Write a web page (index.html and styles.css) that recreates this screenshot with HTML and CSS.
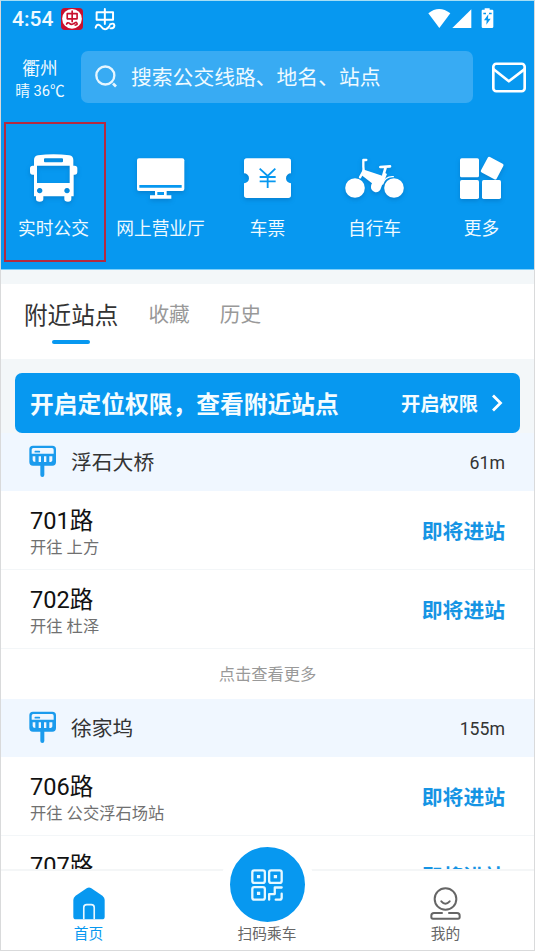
FILE: index.html
```html
<!DOCTYPE html>
<html lang="zh-CN">
<head>
<meta charset="utf-8">
<title>公交出行</title>
<link rel="stylesheet" href="styles.css">
</head>
<body>
<div class="app">
  <header class="header">
    <div class="status">
      <span class="clock">4:54</span>
      <svg class="status-app" viewBox="183 21 67 67">
        <rect x="183" y="21" width="67" height="67" rx="12" fill="#c8102e"/>
        <circle cx="216.500" cy="54" r="30" fill="#fff"/>
        <g fill="none" stroke="#c8102e" stroke-width="5" stroke-linejoin="round" stroke-linecap="round">
          <path d="M202 38h30v16h-30zM217 30v33M200 70q3-6 8-3 6 6 11 3 5-2 9-5M230 65q6 8-4 8"/>
        </g>
      </svg>
      <svg class="status-glyph" viewBox="282 20 67 70">
        <g fill="none" stroke="#fff" stroke-width="6" stroke-linejoin="round" stroke-linecap="round">
          <path d="M290 33h50v23h-50zM315 23v46M287 80q2-10 9-9 5 1 9 7 5 8 14 6 6-2 10-9M331 70q12-6 13 3 0 9-12 9"/>
        </g>
      </svg>
      <svg class="status-system" viewBox="490 18 198 66">
        <g fill="#fff">
          <path d="M491 37q32-26 66 0l-33 44z"/>
          <path d="M563 81l57-56v56z"/>
          <path d="M660 26v-4h15v4h8q3 0 3 3v48q0 4-4 4h-27q-4 0-4-4V29q0-3 3-3z"/>
        </g>
        <path fill="#0798f0" d="M656 35h8v5h-8zM673 35h8v5h-8zM671 40l-13 18h8l-1 13 13-18h-8z"/>
      </svg>
    </div>
    <div class="search-row">
      <div class="weather">
        <div class="city">衢州</div>
        <div class="temp">晴 36℃</div>
      </div>
      <div class="search">
        <svg class="search-icon" viewBox="285 196 66 68">
          <circle cx="316" cy="227" r="27" fill="none" stroke="#e6f6ff" stroke-width="7"/>
          <path d="M339 251l9 9" stroke="#e6f6ff" stroke-width="8"/>
        </svg>
        <span>搜索公交线路、地名、站点</span>
      </div>
      <svg class="mail" viewBox="681 184 103 93">
        <g fill="none" stroke="#fff" stroke-width="8" stroke-linejoin="round">
          <rect x="685" y="189" width="95" height="83" rx="9"/>
          <path d="M685 205l47 37 48-37"/>
        </g>
      </svg>
    </div>
    <nav class="services">
      <div class="service selected">
        <svg viewBox="69 102 183 156">
          <path fill="#fff" fill-rule="evenodd" d="M102 126q0-12 12-14 46-7 94 0 12 2 12 14v17h4q8 0 8 8v10q0 9-8 9h-3v65h-7v8q0 8-10 8-11 0-11-8v-8h-63v8q0 8-11 8t-11-8v-8h-6v-65h-4q-8 0-8-9v-10q0-8 8-8h4zM135 121q-3 0-3 3v6q0 3 3 3h51q3 0 3-3v-6q0-3-3-3zM111 143v52h98v-52zM119 210a8 8 0 1 0 .1 0zM201 210a8 8 0 1 0 .1 0z"/>
        </svg>
        <span>实时公交</span>
      </div>
      <div class="service">
        <svg viewBox="390 102 183 156">
          <g fill="#fff">
            <rect x="411" y="121" width="142" height="98" rx="6"/>
            <path d="M465 219h35v13h14v10h-64v-10h15z"/>
          </g>
          <path fill="#0798f0" d="M418 201h127v8H418zM472 222h20v9h-20z"/>
        </svg>
        <span>网上营业厅</span>
      </div>
      <div class="service">
        <svg viewBox="51 102 183 156">
          <path fill="#fff" d="M80 121h125q8 0 8 8v37a15 15 0 0 0 0 30v36q0 8-8 8H80q-8 0-8-8v-36a15 15 0 0 0 0-30v-37q0-8 8-8z"/>
          <path fill="none" stroke="#0798f0" stroke-width="5.500" d="M119 152l24 22 23-22M143 174v36M119 177h48M119 190h48"/>
        </svg>
        <span>车票</span>
      </div>
      <div class="service">
        <svg viewBox="372 102 183 156">
          <g fill="#fff">
            <circle cx="405" cy="210" r="29.500"/>
            <circle cx="522" cy="210" r="29.500"/>
            <path d="M428 154l61 20 5-10 7 4-8 20-7 14-3 8a15 15 0 0 1-30-5q0-4 3-9l-32-25z"/>
          </g>
          <g fill="none" stroke="#fff" stroke-linecap="round" stroke-linejoin="round">
            <path stroke-width="7" d="M439 126h-9v20l1 12-11 20"/>
            <path stroke-width="8" d="M481 147l29-2M497 148l-7 24"/>
            <path stroke-width="4" d="M488 198q8-24 32-22"/>
          </g>
        </svg>
        <span>自行车</span>
      </div>
      <div class="service">
        <svg viewBox="693 102 183 156">
          <g fill="#fff">
            <rect x="720" y="121" width="57" height="57" rx="5"/>
            <rect x="720" y="186" width="57" height="57" rx="5"/>
            <rect x="786" y="186" width="57" height="57" rx="5"/>
            <rect x="790" y="124" width="53" height="53" rx="5" transform="rotate(28 816.500 150.500)"/>
          </g>
        </svg>
        <span>更多</span>
      </div>
    </nav>
  </header>

  <div class="tabs">
    <span class="tab active">附近站点</span>
    <span class="tab">收藏</span>
    <span class="tab">历史</span>
  </div>

  <main class="content">
    <div class="banner">
      <span class="banner-title">开启定位权限，查看附近站点</span>
      <span class="banner-action">开启权限</span>
      <svg class="chevron" viewBox="0 0 12 20"><path d="M2 2.500l7.500 7.500L2 17.500" fill="none" stroke="#fff" stroke-width="2.800"/></svg>
    </div>

    <section>
      <div class="station">
        <svg class="sign" viewBox="88 46 84 99">
          <path fill="#1b9bed" d="M100 48h58q11 0 11 11v38q0 11-11 11h-24v28q0 6-6 6t-6-6v-28h-22q-11 0-11-11V59q0-11 11-11z"/>
          <path fill="#f0f7ff" d="M101 55h56q5 0 5 5v12H96V60q0-5 5-5zM99 80h8v17q-8 0-8-6zM117 80h7v17h-7zM133 80h7v17h-7zM149 80h9v11q0 6-9 6z"/>
          <path stroke="#1b9bed" stroke-width="5" stroke-linecap="round" d="M107 66h12"/>
        </svg>
        <span class="station-name">浮石大桥</span>
        <span class="distance">61m</span>
      </div>
      <div class="route">
        <div><div class="route-name">701路</div><div class="route-to">开往 上方</div></div>
        <span class="arrival">即将进站</span>
      </div>
      <div class="route">
        <div><div class="route-name">702路</div><div class="route-to">开往 杜泽</div></div>
        <span class="arrival">即将进站</span>
      </div>
      <div class="more">点击查看更多</div>
    </section>

    <section>
      <div class="station">
        <svg class="sign" viewBox="88 46 84 99">
          <path fill="#1b9bed" d="M100 48h58q11 0 11 11v38q0 11-11 11h-24v28q0 6-6 6t-6-6v-28h-22q-11 0-11-11V59q0-11 11-11z"/>
          <path fill="#f0f7ff" d="M101 55h56q5 0 5 5v12H96V60q0-5 5-5zM99 80h8v17q-8 0-8-6zM117 80h7v17h-7zM133 80h7v17h-7zM149 80h9v11q0 6-9 6z"/>
          <path stroke="#1b9bed" stroke-width="5" stroke-linecap="round" d="M107 66h12"/>
        </svg>
        <span class="station-name">徐家坞</span>
        <span class="distance">155m</span>
      </div>
      <div class="route">
        <div><div class="route-name">706路</div><div class="route-to">开往 公交浮石场站</div></div>
        <span class="arrival">即将进站</span>
      </div>
      <div class="route">
        <div><div class="route-name">707路</div></div>
        <span class="arrival">即将进站</span>
      </div>
    </section>
  </main>

  <footer class="tabbar">
    <div class="tabbar-item current">
      <svg class="home" viewBox="218 592 98 99">
        <path fill="#0798f0" d="M261 594q6-3 12 0l35 24q7 5 7 13v51q0 8-8 8h-80q-8 0-8-8v-51q0-8 7-13z"/>
        <path fill="none" stroke="#e9f8ff" stroke-width="5" d="M251 690v-36q0-9 9-9h14q9 0 9 9v36"/>
      </svg>
      <span>首页</span>
    </div>
    <div class="tabbar-item scan">
      <div class="scan-button">
        <svg viewBox="154 115 97 97">
          <g fill="none" stroke="#e6f8ff" stroke-width="7" stroke-linejoin="round" stroke-linecap="round">
            <rect x="158" y="119" width="38" height="38" rx="6"/>
            <rect x="209" y="119" width="38" height="38" rx="6"/>
            <rect x="158" y="170" width="38" height="38" rx="6"/>
            <path d="M209 208v-17h17v-20h21M247 190v12q0 6-6 6h-12"/>
          </g>
          <path fill="#e6f8ff" d="M172 133h10v10h-10zM223 133h10v10h-10zM172 184h10v10h-10z"/>
        </svg>
      </div>
      <span>扫码乘车</span>
    </div>
    <div class="tabbar-item">
      <svg class="mine" viewBox="690 172 93 99">
        <g fill="none" stroke="#666" stroke-width="6" stroke-linecap="round" stroke-linejoin="round">
          <circle cx="736.500" cy="208" r="32.500"/>
          <path d="M724 215q12 14 25 0"/>
          <path d="M726 250h-24q-8 0-8 8v5q0 4 5 4h75q5 0 5-4v-5q0-8-8-8h-24"/>
        </g>
      </svg>
      <span>我的</span>
    </div>
  </footer>
</div>
</body>
</html>
```
FILE: styles.css
```css
* { box-sizing: border-box; }

body {
  margin: 0;
  font-family: Roboto, "Noto Sans CJK SC", sans-serif;
  color: #333;
}

svg { display: block; flex: none; }

.app {
  width: 535px;
  height: 951px;
  border: 1px solid #d9dadb;
  border-top-color: #a5def5;
  background: #fff;
  display: flex;
  flex-direction: column;
  overflow: hidden;
}

.header {
  height: 269px;
  flex: none;
  background: #0798f0;
  border-bottom: 1px solid #7fd0fa;
  color: #effaff;
}

.status {
  height: 36px;
  display: flex;
  align-items: center;
  padding: 0 40px 0 11px;
}
.clock { font-size: 21px; font-weight: 500; width: 49px; white-space: nowrap; }
.status-app { width: 22px; height: 22px; }
.status-glyph { width: 22px; height: 23px; margin-left: 11px; }
.status-system { width: 66px; height: 22px; margin: -3px 0 0 auto; }

.search-row {
  display: flex;
  align-items: center;
  height: 52px;
  margin-top: 14px;
}
.weather { width: 80px; text-align: center; padding: 3px 2px 0 0; }
.city { font-size: 17.7px; line-height: 24px; }
.temp { font-size: 14.7px; line-height: 20px; white-space: nowrap; }
.search {
  width: 392px;
  height: 52px;
  border-radius: 7px;
  background: #38abf3;
  display: flex;
  align-items: center;
  gap: 14px;
  padding: 0 0 1px 14px;
  font-size: 20.8px;
}
.search span { margin-top: -1px; }
.search-icon { width: 22px; height: 23px; }
.mail { width: 34px; height: 31px; margin: 0 0 0 19px; }

.services {
  display: grid;
  grid-template-columns: repeat(5, 107px);
  margin: 19px -1px 0;
}
.service {
  height: 140px;
  display: flex;
  flex-direction: column;
  align-items: center;
  padding-top: 30px;
  font-size: 17.7px;
  line-height: 24px;
}
.service svg {
  width: 61px;
  height: 52px;
  margin-bottom: 13px;
  filter: drop-shadow(0 2px 2px rgba(0, 60, 120, .25));
}
.selected {
  width: 102px;
  margin-left: 4px;
  border: 2px solid #b42a40;
  padding-top: 28px;
}
.selected svg, .selected span { margin-left: -3px; }

.tabs {
  height: 89px;
  flex: none;
  border-top: 14px solid #f3f7f9;
  padding-left: 23px;
  display: flex;
  gap: 30px;
  font-size: 20.7px;
  line-height: 62px;
  color: #999;
}
.active {
  font-size: 23.6px;
  line-height: 64px;
  color: #333;
}
.active::after {
  content: "";
  display: block;
  width: 38px;
  height: 4px;
  border-radius: 2px;
  background: #0798f0;
  margin: -8px auto 0;
}

.content {
  flex: 1;
  min-height: 0;
  overflow: hidden;
  border-top: 14px solid #f3f7f9;
  background: linear-gradient(#f3f7f9 60px, #fff 60px);
}
.banner {
  height: 60px;
  margin: 0 14px;
  padding: 0 17px 0 15px;
  border-radius: 7px;
  background: #0798f0;
  color: #f4fcff;
  display: flex;
  align-items: center;
  font-weight: 700;
  white-space: nowrap;
}
.banner-title { font-size: 23.75px; margin-top: -2px; }
.banner-action { font-size: 19.3px; margin-left: auto; }
.chevron { width: 12px; height: 20px; margin-left: 13px; }

.station {
  height: 58px;
  background: #f0f7ff;
  display: flex;
  align-items: center;
  padding: 0 29px 0 28px;
}
.sign { width: 28px; height: 33px; margin: -2px 1px 0 0; }
.station-name { font-size: 20.8px; margin-left: 13px; margin-top: -2px; }
.distance { font-size: 17.7px; margin-left: auto; padding-top: 2px; }

.route {
  height: 79px;
  border-bottom: 1px solid #f3f6f8;
  padding: 13px 29px 0;
  display: flex;
  justify-content: space-between;
}
.route-name { font-size: 23.6px; line-height: 35px; color: #111; }
.route-to { font-size: 16.3px; line-height: 18px; color: #707070; white-space: nowrap; }
.arrival { font-size: 20.8px; font-weight: 700; line-height: 56px; color: #1594e4; }
.more {
  height: 50px;
  line-height: 52px;
  text-align: center;
  font-size: 16.3px;
  color: #999;
}

.tabbar {
  height: 81px;
  flex: none;
  border-top: 2px solid #f4f6f7;
  background: #fff;
  display: grid;
  grid-template-columns: 175px 1fr 177px;
  grid-template-rows: 79px;
  font-size: 14.7px;
  line-height: 20px;
  color: #666;
}
.tabbar-item {
  height: 79px;
  display: flex;
  flex-direction: column;
  align-items: center;
  justify-content: flex-end;
  padding-bottom: 6px;
}
.current { color: #0798f0; }
.home { width: 32px; height: 33px; margin-bottom: 4px; }
.mine { width: 31px; height: 33px; margin-bottom: 4px; }
.scan { padding-left: 1px; }
.scan-button {
  width: 93px;
  height: 93px;
  flex: none;
  margin-bottom: -7px;
  border: 9px solid #fff;
  border-radius: 50%;
  background: #0798f0;
  display: flex;
  align-items: center;
  justify-content: center;
}
.scan-button svg { width: 32px; height: 32px; }
.scan span { position: relative; }
```
